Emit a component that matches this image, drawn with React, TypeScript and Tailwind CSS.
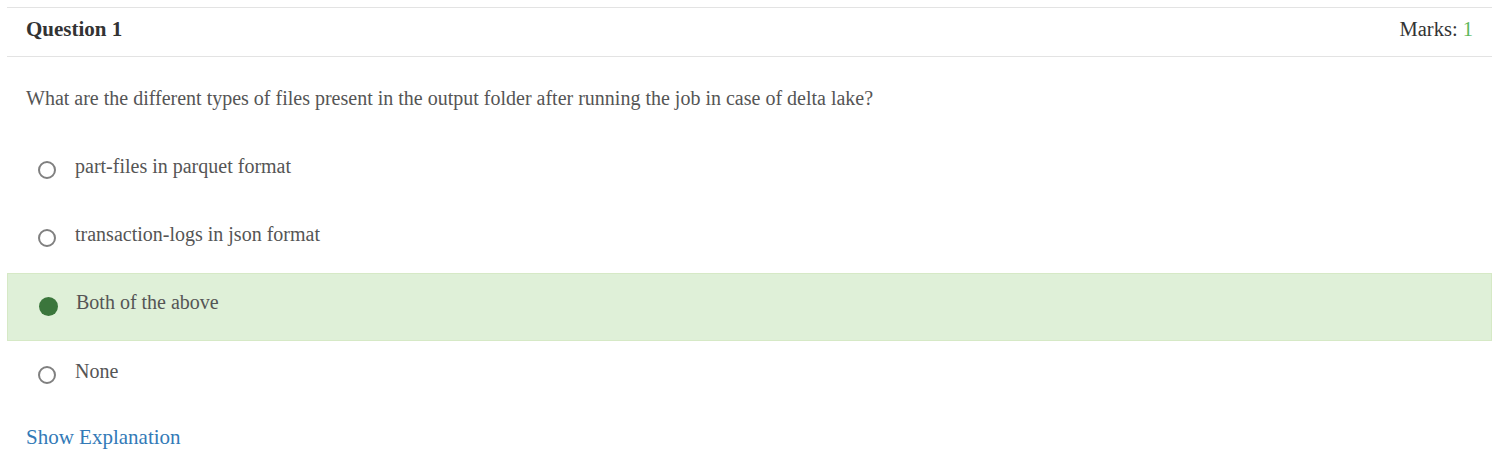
import React from "react";

const options = [
  { text: "part-files in parquet format", selected: false },
  { text: "transaction-logs in json format", selected: false },
  { text: "Both of the above", selected: true },
  { text: "None", selected: false },
];

export default function App() {
  return (
    <div
      className="w-full bg-white pl-[7px] pt-[7px]"
      style={{ fontFamily: '"Liberation Serif", "Times New Roman", serif' }}
    >
      <div className="w-full">
        <div className="flex h-[50px] items-center justify-between border-t border-b border-[#e3e3e3] px-[19px] pb-[6px] text-[21px] leading-[24px] text-[#333]">
          <span className="font-bold">Question 1</span>
          <span className="text-[20.5px]">
            Marks: <span className="text-[#5cb85c]">1</span>
          </span>
        </div>
        <p className="mt-[30px] pl-[19px] text-[20px] leading-[23px] text-[#555]">
          What are the different types of files present in the output folder after running the job in case of delta lake?
        </p>
        <div className="mt-[27px]">
          {options.map((o, i) => (
            <div
              key={o.text}
              className={
                o.selected
                  ? "flex h-[68px] items-start border border-[#d6e9c6] bg-[#dff0d8] pl-[31px] pt-[17px]"
                  : i === 3
                  ? "flex h-[68px] items-start border border-transparent pl-[30px] pt-[18px]"
                  : "flex h-[68px] items-start border border-transparent pl-[30px] pt-[17px]"
              }
            >
              {o.selected ? (
                <span className="mt-[6px] h-[19px] w-[19px] shrink-0 rounded-full bg-[#3b763c]" />
              ) : (
                <span className="mt-[6px] h-[18px] w-[18px] shrink-0 rounded-full border-2 border-[#808080]" />
              )}
              <span
                className={
                  o.selected
                    ? "ml-[18px] text-[20px] leading-[23px] text-[#555]"
                    : "ml-[19px] text-[20px] leading-[23px] text-[#555]"
                }
              >
                {o.text}
              </span>
            </div>
          ))}
        </div>
        <div className="mt-[17px] pl-[19px] pb-[20px]">
          <a className="text-[21px] leading-[23px] text-[#337ab7]" href="#">
            Show Explanation
          </a>
        </div>
      </div>
    </div>
  );
}
